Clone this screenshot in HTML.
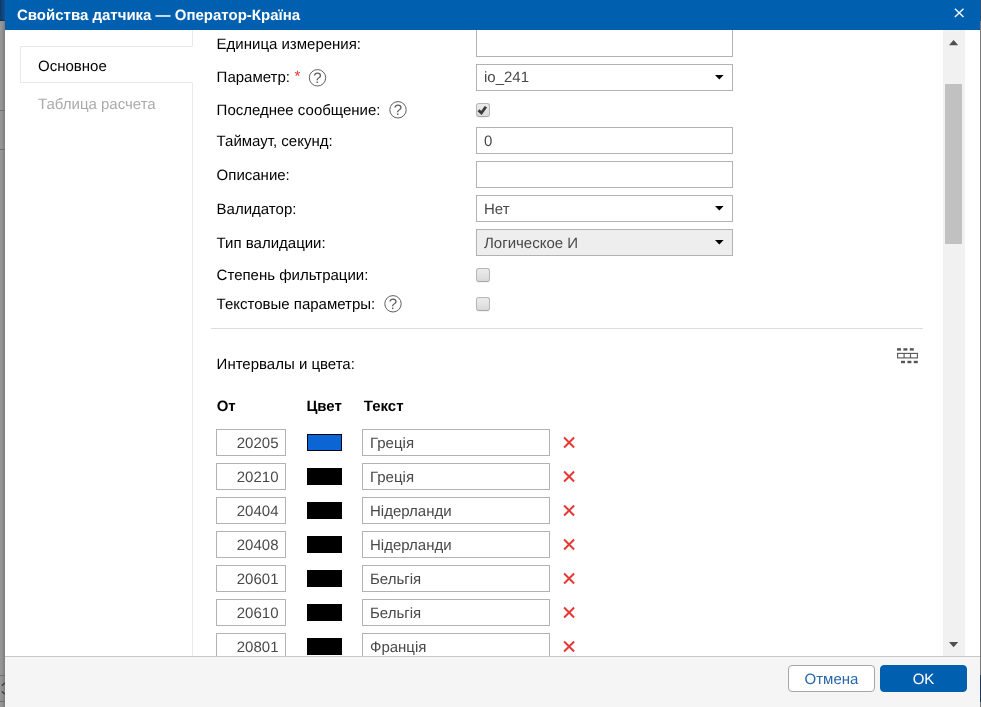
<!DOCTYPE html>
<html lang="ru"><head><meta charset="utf-8"><title>Свойства датчика — Оператор-Країна</title>
<style>
*{box-sizing:border-box}
html,body{margin:0;padding:0}
body{width:981px;height:707px;overflow:hidden;position:relative;background:#989898;font-family:"Liberation Sans",sans-serif;font-size:15px;color:#000;line-height:17px;text-rendering:geometricPrecision;}
.bgl{position:absolute;left:0;top:0;width:5px;height:707px;background:linear-gradient(90deg,#989898,#929292 40%,#7c7c7c)}
.bgtop{position:absolute;left:0;top:0;width:6px;height:21px;background:linear-gradient(90deg,#0a3c6c,#1a5490);border-bottom:1px solid #0c3058}
.bgr{position:absolute;left:980px;top:0;width:1px;height:707px;background:linear-gradient(#24507c 0,#24507c 21px,#787878 21px,#787878 675px,#1a3a5c 675px,#1a3a5c 702px,#787878 702px)}
.dlg{position:absolute;left:5px;top:0;width:975px;height:720px;background:#fff;will-change:transform;}
.ttl{position:absolute;left:0;top:0;width:975px;height:30px;background:#005faf;color:#fff;font-weight:bold;font-size:15px;line-height:32px;padding-left:12px;white-space:nowrap}
.cls{position:absolute;left:948px;top:7px}
.tabs{position:absolute;left:15px;top:30px;width:173px;height:626px;border-right:1px solid #e9e9e9}
.tab{position:absolute;left:0;width:173px;height:37px;line-height:39px;padding-left:18px;color:#aaa;white-space:nowrap}
.tab.act{top:16px;border:1px solid #e8e8e8;border-right:1px solid #fff;background:#fff;color:#000;width:173px;line-height:39px;padding-left:17px}
.scroll{position:absolute;left:-5px;top:0;width:981px;height:656px;overflow:hidden}
.lbl{position:absolute;left:216.6px;white-space:nowrap;height:17px}
.req{color:#e5332f;position:relative;top:-1px;left:0.4px}
.inp{position:absolute;height:27px;border:1px solid #b2b2b2;background:#fff;color:#484848;padding:0 7px;line-height:27px;white-space:nowrap;overflow:hidden}
.inp.sel{line-height:25px}
.inp.dis{background:#eee}
.inp.first{height:28px}
.inp.num{text-align:right;padding-right:6.5px}
.arr{position:absolute;right:7px;top:9px}
.help{position:absolute}
.cb{position:absolute;width:14px;height:14px;border:1px solid #b6b6b6;border-bottom-color:#a8a8a8;border-radius:3px;background:linear-gradient(#ececec,#dadada);box-shadow:0 1px 0 rgba(0,0,0,.05)}
.cb svg{position:absolute;left:-1px;top:-1px}
.sep{position:absolute;left:211px;top:328px;width:712px;height:1px;background:#dcdcdc}
.tbl{position:absolute;left:897px;top:348px}
.th{position:absolute;font-weight:bold;color:#000;white-space:nowrap}
.sw{position:absolute;left:307px;width:35px;height:17px;border:1px solid #000}
.del{position:absolute;left:563px}
.sb{position:absolute;left:938px;top:30px;width:21.5px;height:626px;background:#f1f1f1}
.sb svg{position:absolute;left:0;top:0}
.sb .thumb{position:absolute;left:2px;top:54px;width:17px;height:160px;background:#c1c1c1}
.ft{position:absolute;left:0;top:656px;width:975px;height:60px;background:#f5f5f5;border-top:1px solid #c8c8c8}
.btn{position:absolute;top:8px;width:87px;height:27px;border-radius:4px;text-align:center;line-height:27px;font-size:15px;overflow:hidden}
.btn.c{left:783px;background:#fff;border:1px solid #a6a6a6;color:#2766a9}
.btn.ok{left:875px;background:#005faf;border:1px solid #005faf;color:#fff}
</style></head>
<body>
<div class="bgl"></div><div class="bgtop"></div>
<svg width="5" height="707" viewBox="0 0 5 707" style="position:absolute;left:0;top:0"><path d="M0 110.5h5M0 149.5h5M0 675.5h5M0 701.5h5" stroke="#707070" stroke-width="1" fill="none"/><path d="M4.8 683L1.8 685.8M1.8 691.4L4.8 694" stroke="#3c3c3c" stroke-width="1.3" fill="none"/></svg>
<div class="bgr"></div>
<div class="dlg">
<div class="scroll">
<div class="lbl" style="top:36px">Единица измерения:</div>
<div class="inp first" style="left:476px;top:29px;width:257px"></div>
<div class="lbl" style="top:69px">Параметр: <span class="req">*</span></div>
<svg class="help" style="left:306px;top:66px" width="22" height="22" viewBox="0 0 22 22"><circle cx="11.5" cy="11.8" r="8.2" fill="#fff" stroke="#606060" stroke-width="1"/><text x="11.5" y="17.3" text-anchor="middle" font-family="Liberation Sans, sans-serif" font-size="15" fill="#5c5c5c">?</text></svg>
<div class="inp sel" style="left:476px;top:64px;width:257px;line-height:25px">io_241<svg class="arr" width="11" height="7" viewBox="0 0 11 7"><path d="M1 1h8.6L5.3 5.6z" fill="#000"/></svg></div>
<div class="lbl" style="top:102px">Последнее сообщение:</div>
<svg class="help" style="left:387px;top:98px" width="22" height="22" viewBox="0 0 22 22"><circle cx="11" cy="11.8" r="8.2" fill="#fff" stroke="#606060" stroke-width="1"/><text x="11" y="17.3" text-anchor="middle" font-family="Liberation Sans, sans-serif" font-size="15" fill="#5c5c5c">?</text></svg>
<div class="cb" style="left:476px;top:103px"><svg width="14" height="14" viewBox="0 0 14 14"><path d="M2.5 7.3 L5.4 10 L9.9 3.8" fill="none" stroke="#3a3a3a" stroke-width="2.8"/></svg></div>
<div class="lbl" style="top:133px">Таймаут, секунд:</div>
<div class="inp" style="left:476px;top:127px;width:257px">0</div>
<div class="lbl" style="top:167px">Описание:</div>
<div class="inp" style="left:476px;top:161px;width:257px"></div>
<div class="lbl" style="top:201px">Валидатор:</div>
<div class="inp sel" style="left:476px;top:195px;width:257px;line-height:27px">Нет<svg class="arr" width="11" height="7" viewBox="0 0 11 7"><path d="M1 1h8.6L5.3 5.6z" fill="#000"/></svg></div>
<div class="lbl" style="top:235px">Тип валидации:</div>
<div class="inp sel dis" style="left:476px;top:229px;width:257px;line-height:27px">Логическое И<svg class="arr" width="11" height="7" viewBox="0 0 11 7"><path d="M1 1h8.6L5.3 5.6z" fill="#000"/></svg></div>
<div class="lbl" style="top:267px">Степень фильтрации:</div>
<div class="cb" style="left:476px;top:268px"></div>
<div class="lbl" style="top:296px">Текстовые параметры:</div>
<svg class="help" style="left:382px;top:292px" width="22" height="22" viewBox="0 0 22 22"><circle cx="11" cy="11.8" r="8.2" fill="#fff" stroke="#606060" stroke-width="1"/><text x="11" y="17.3" text-anchor="middle" font-family="Liberation Sans, sans-serif" font-size="15" fill="#5c5c5c">?</text></svg>
<div class="cb" style="left:476px;top:297px"></div>
<div class="sep"></div>
<div class="lbl" style="top:356px">Интервалы и цвета:</div>
<svg class="tbl" width="22" height="17" viewBox="0 0 22 17">
<g fill="#555"><rect x="0" y="0.2" width="4" height="2.4"/><rect x="6.4" y="0.2" width="4" height="2.4"/><rect x="12.8" y="0.2" width="4" height="2.4"/>
<rect x="4" y="12.8" width="4" height="2.4"/><rect x="10.4" y="12.8" width="4" height="2.4"/><rect x="16.8" y="12.8" width="4" height="2.4"/></g>
<rect x="0.6" y="5.4" width="19.8" height="4.5" fill="#fff" stroke="#555" stroke-width="1.1"/>
<path d="M7.1 5.4v4.5M13.5 5.4v4.5" stroke="#555" stroke-width="1.1"/></svg>
<div class="th" style="left:216.7px;top:398px">От</div><div class="th" style="left:306.4px;top:398px">Цвет</div><div class="th" style="left:363.8px;top:398px">Текст</div>
<div class="inp num" style="left:216px;top:429px;width:70px">20205</div>
<div class="sw" style="top:434px;background:#0b65d5;border-color:#00061a"></div>
<div class="inp" style="left:362px;top:429px;width:188px">Греція</div>
<svg class="del" style="top:436px" width="13" height="13" viewBox="0 0 13 13"><path d="M1.1 1.5L11.1 11.5M11.1 1.5L1.1 11.5" stroke="#e53935" stroke-width="2" fill="none"/></svg>
<div class="inp num" style="left:216px;top:463px;width:70px">20210</div>
<div class="sw" style="top:468px;background:#000;border-color:#000"></div>
<div class="inp" style="left:362px;top:463px;width:188px">Греція</div>
<svg class="del" style="top:470px" width="13" height="13" viewBox="0 0 13 13"><path d="M1.1 1.5L11.1 11.5M11.1 1.5L1.1 11.5" stroke="#e53935" stroke-width="2" fill="none"/></svg>
<div class="inp num" style="left:216px;top:497px;width:70px">20404</div>
<div class="sw" style="top:502px;background:#000;border-color:#000"></div>
<div class="inp" style="left:362px;top:497px;width:188px">Нідерланди</div>
<svg class="del" style="top:504px" width="13" height="13" viewBox="0 0 13 13"><path d="M1.1 1.5L11.1 11.5M11.1 1.5L1.1 11.5" stroke="#e53935" stroke-width="2" fill="none"/></svg>
<div class="inp num" style="left:216px;top:531px;width:70px">20408</div>
<div class="sw" style="top:536px;background:#000;border-color:#000"></div>
<div class="inp" style="left:362px;top:531px;width:188px">Нідерланди</div>
<svg class="del" style="top:538px" width="13" height="13" viewBox="0 0 13 13"><path d="M1.1 1.5L11.1 11.5M11.1 1.5L1.1 11.5" stroke="#e53935" stroke-width="2" fill="none"/></svg>
<div class="inp num" style="left:216px;top:565px;width:70px">20601</div>
<div class="sw" style="top:570px;background:#000;border-color:#000"></div>
<div class="inp" style="left:362px;top:565px;width:188px">Бельгія</div>
<svg class="del" style="top:572px" width="13" height="13" viewBox="0 0 13 13"><path d="M1.1 1.5L11.1 11.5M11.1 1.5L1.1 11.5" stroke="#e53935" stroke-width="2" fill="none"/></svg>
<div class="inp num" style="left:216px;top:599px;width:70px">20610</div>
<div class="sw" style="top:604px;background:#000;border-color:#000"></div>
<div class="inp" style="left:362px;top:599px;width:188px">Бельгія</div>
<svg class="del" style="top:606px" width="13" height="13" viewBox="0 0 13 13"><path d="M1.1 1.5L11.1 11.5M11.1 1.5L1.1 11.5" stroke="#e53935" stroke-width="2" fill="none"/></svg>
<div class="inp num" style="left:216px;top:633px;width:70px">20801</div>
<div class="sw" style="top:638px;background:#000;border-color:#000"></div>
<div class="inp" style="left:362px;top:633px;width:188px">Франція</div>
<svg class="del" style="top:640px" width="13" height="13" viewBox="0 0 13 13"><path d="M1.1 1.5L11.1 11.5M11.1 1.5L1.1 11.5" stroke="#e53935" stroke-width="2" fill="none"/></svg>
</div>
<div class="tabs"><div class="tab act">Основное</div><div class="tab" style="top:55px">Таблица расчета</div></div>
<div class="sb"><svg width="22" height="626" viewBox="0 0 22 626"><path d="M6 15.2h9.2L10.6 10z M6 612h9.2L10.6 617.2z" fill="#505050"/></svg><div class="thumb"></div></div>
<div class="ttl">Свойства датчика — Оператор-Країна<svg class="cls" width="12" height="12" viewBox="0 0 12 12"><path d="M1.9 1.8L10.5 10.1M10.5 1.8L1.9 10.1" stroke="#f4faff" stroke-width="1.4" fill="none"/></svg></div>
<div class="ft"><div class="btn c">Отмена</div><div class="btn ok">OK</div></div>
</div>
</body></html>
